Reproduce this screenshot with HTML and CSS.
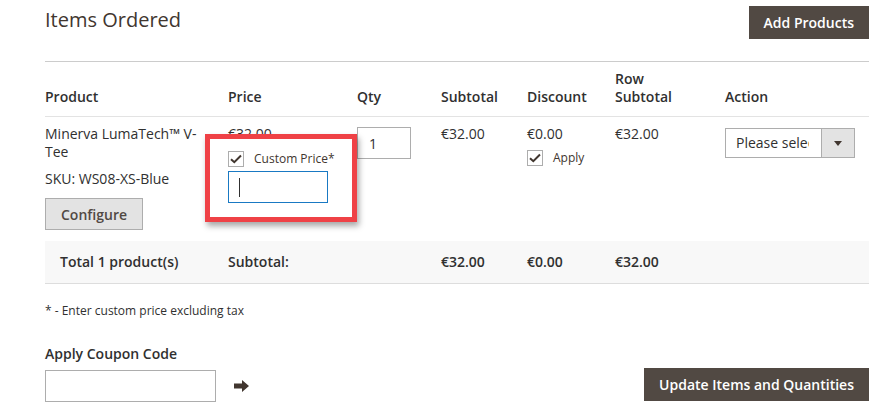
FILE: index.html
```html
<!DOCTYPE html>
<html lang="en">
<head>
    <meta charset="UTF-8">
    <meta name="viewport" content="width=device-width, initial-scale=1.0">
    <title>Items Ordered</title>
    <link rel="stylesheet" href="styles.css">
</head>
<body>
    <div class="page">
        <div class="section-head">
            <h2 class="section-title">Items Ordered</h2>
            <button class="btn btn-primary">Add Products</button>
        </div>

        <table class="items">
            <colgroup>
                <col class="w-product">
                <col class="w-price">
                <col class="w-qty">
                <col class="w-subtotal">
                <col class="w-discount">
                <col class="w-row">
                <col class="w-action">
            </colgroup>
            <thead>
                <tr>
                    <th>Product</th>
                    <th>Price</th>
                    <th>Qty</th>
                    <th>Subtotal</th>
                    <th>Discount</th>
                    <th>Row<br>Subtotal</th>
                    <th>Action</th>
                </tr>
            </thead>
            <tbody>
                <tr class="item-row">
                    <td>
                        <div class="product-name">Minerva LumaTech™ V-Tee</div>
                        <div class="sku">SKU: WS08-XS-Blue</div>
                        <button class="btn btn-secondary">Configure</button>
                    </td>
                    <td>
                        <div class="price">€32.00</div>
                        <div class="custom-price">
                            <label class="check">
                                <span class="checkbox"><svg width="12" height="10" viewBox="0 0 12 10"><path d="M1 5.2 L4.3 8.2 L11 1.5" fill="none" stroke="#41362f" stroke-width="2"/></svg></span>
                                Custom Price*
                            </label>
                            <div class="custom-input"><input type="text"><span class="caret"></span></div>
                            <span class="highlight"></span>
                        </div>
                    </td>
                    <td><input class="qty" type="text" value="1"></td>
                    <td>€32.00</td>
                    <td>
                        <div class="price">€0.00</div>
                        <label class="check">
                            <span class="checkbox"><svg width="12" height="10" viewBox="0 0 12 10"><path d="M1 5.2 L4.3 8.2 L11 1.5" fill="none" stroke="#41362f" stroke-width="2"/></svg></span>
                            Apply
                        </label>
                    </td>
                    <td>€32.00</td>
                    <td>
                        <div class="select">
                            <span class="select-value"><span>Please select</span></span>
                            <span class="select-arrow"><svg width="8" height="5" viewBox="0 0 8 5"><path d="M0 0 H8 L4 5 Z" fill="#41362f"/></svg></span>
                        </div>
                    </td>
                </tr>
            </tbody>
            <tfoot>
                <tr class="totals">
                    <td class="totals-label">Total 1 product(s)</td>
                    <td>Subtotal:</td>
                    <td></td>
                    <td>€32.00</td>
                    <td>€0.00</td>
                    <td>€32.00</td>
                    <td></td>
                </tr>
            </tfoot>
        </table>

        <p class="note">* - Enter custom price excluding tax</p>

        <div class="bottom-bar">
            <div class="coupon">
                <label class="coupon-label" for="coupon">Apply Coupon Code</label>
                <div class="coupon-field">
                    <input id="coupon" type="text">
                    <svg class="coupon-apply" width="15" height="12" viewBox="0 0 15 12"><path d="M0 3.5 H8 V0 L15 6 L8 12 V8.5 H0 Z" fill="#41362f"/></svg>
                </div>
            </div>
            <button class="btn btn-primary btn-update">Update Items and Quantities</button>
        </div>
    </div>
</body>
</html>
```

FILE: styles.css
```css
body {
    margin: 0;
    font-family: 'Open Sans', 'DejaVu Sans', sans-serif;
    font-size: 14px;
    color: #303030;
    background: #ffffff;
}

.page {
    width: 824px;
    padding: 6px 27px 0 45px;
}

.section-head {
    display: flex;
    justify-content: space-between;
    align-items: flex-start;
    height: 55px;
}

.section-title {
    margin: 0;
    font-size: 20px;
    font-weight: 400;
    line-height: 28px;
    color: #41362f;
}

.btn {
    font-family: inherit;
    font-size: 14px;
    font-weight: 600;
    cursor: pointer;
    padding: 0 15px;
}

.btn-primary {
    height: 33px;
    background: #514943;
    color: #ffffff;
    border: none;
}

.btn-secondary {
    height: 32px;
    margin-top: 10px;
    background: #e3e3e3;
    color: #514943;
    border: 1px solid #adadad;
}

/* items table */
.items {
    width: 824px;
    table-layout: fixed;
    border-collapse: collapse;
}

.w-product { width: 183px; }
.w-price { width: 129px; }
.w-qty { width: 84px; }
.w-subtotal { width: 86px; }
.w-discount { width: 88px; }
.w-row { width: 110px; }
.w-action { width: 144px; }

.items thead tr {
    border-top: 1px solid #cccccc;
    border-bottom: 1px solid #e3e3e3;
}

.items th {
    text-align: left;
    vertical-align: bottom;
    font-weight: 600;
    line-height: 18px;
    padding: 8px 0 10px;
    color: #303030;
}

.items td {
    vertical-align: top;
    padding: 0;
    line-height: 18px;
}

.item-row td {
    padding: 8px 0 11px;
}

.product-name {
    max-width: 168px;
}

.sku {
    margin-top: 9px;
}

.custom-price {
    position: relative;
    width: 100px;
    margin-top: 8px;
}

.check {
    display: flex;
    align-items: center;
    gap: 10px;
    font-size: 12px;
    color: #41362f;
    line-height: 16px;
    white-space: nowrap;
}

td > .check {
    margin-top: 7px;
}

.checkbox {
    flex: none;
    width: 14px;
    height: 14px;
    border: 1px solid #adadad;
    display: flex;
    align-items: center;
    justify-content: center;
    background: #ffffff;
}

.custom-input {
    position: relative;
    margin-top: 4px;
}

.custom-input input {
    box-sizing: border-box;
    width: 100px;
    height: 32px;
    border: 1px solid #1979c3;
    padding: 0 10px;
    outline: none;
}

.caret {
    position: absolute;
    left: 11px;
    top: 7px;
    height: 19px;
    border-left: 1px solid #303030;
}

.highlight {
    position: absolute;
    left: -23px;
    top: -17px;
    right: -29px;
    bottom: -19px;
    border: 5px solid #ef4146;
    box-shadow: 2px 4px 6px rgba(0, 0, 0, 0.35);
    pointer-events: none;
}

.qty {
    box-sizing: border-box;
    width: 54px;
    height: 32px;
    margin-top: 2px;
    border: 1px solid #adadad;
    padding: 0 11px;
    font-family: inherit;
    font-size: 14px;
    color: #303030;
}

.select {
    display: flex;
    width: 130px;
    height: 30px;
    margin-top: 3px;
    box-sizing: border-box;
    border: 1px solid #adadad;
    background: #ffffff;
}

.select-value {
    flex: 1;
    min-width: 0;
    padding: 0 12px 0 10px;
    line-height: 28px;
    color: #303030;
}

.select-value span {
    display: block;
    overflow: hidden;
    white-space: nowrap;
}

.select-arrow {
    flex: none;
    width: 32px;
    border-left: 1px solid #adadad;
    background: #e3e3e3;
    display: flex;
    align-items: center;
    justify-content: center;
}

.totals {
    background: #f8f8f8;
    border-bottom: 1px solid #dddddd;
}

.totals td {
    font-weight: 600;
    height: 42px;
    vertical-align: middle;
}

.items .totals-label {
    padding-left: 15px;
}

.note {
    margin: 18px 0 0;
    font-size: 12px;
    line-height: 18px;
    color: #303030;
}

.bottom-bar {
    display: flex;
    justify-content: space-between;
    align-items: flex-end;
    margin-top: 25px;
}

.coupon-label {
    display: block;
    font-weight: 600;
    line-height: 18px;
    color: #303030;
}

.coupon-field {
    display: flex;
    align-items: center;
    gap: 18px;
    margin-top: 7px;
}

.coupon-field input {
    box-sizing: border-box;
    width: 171px;
    height: 32px;
    border: 1px solid #adadad;
}

.btn-update {
    margin-bottom: 1px;
}
```
